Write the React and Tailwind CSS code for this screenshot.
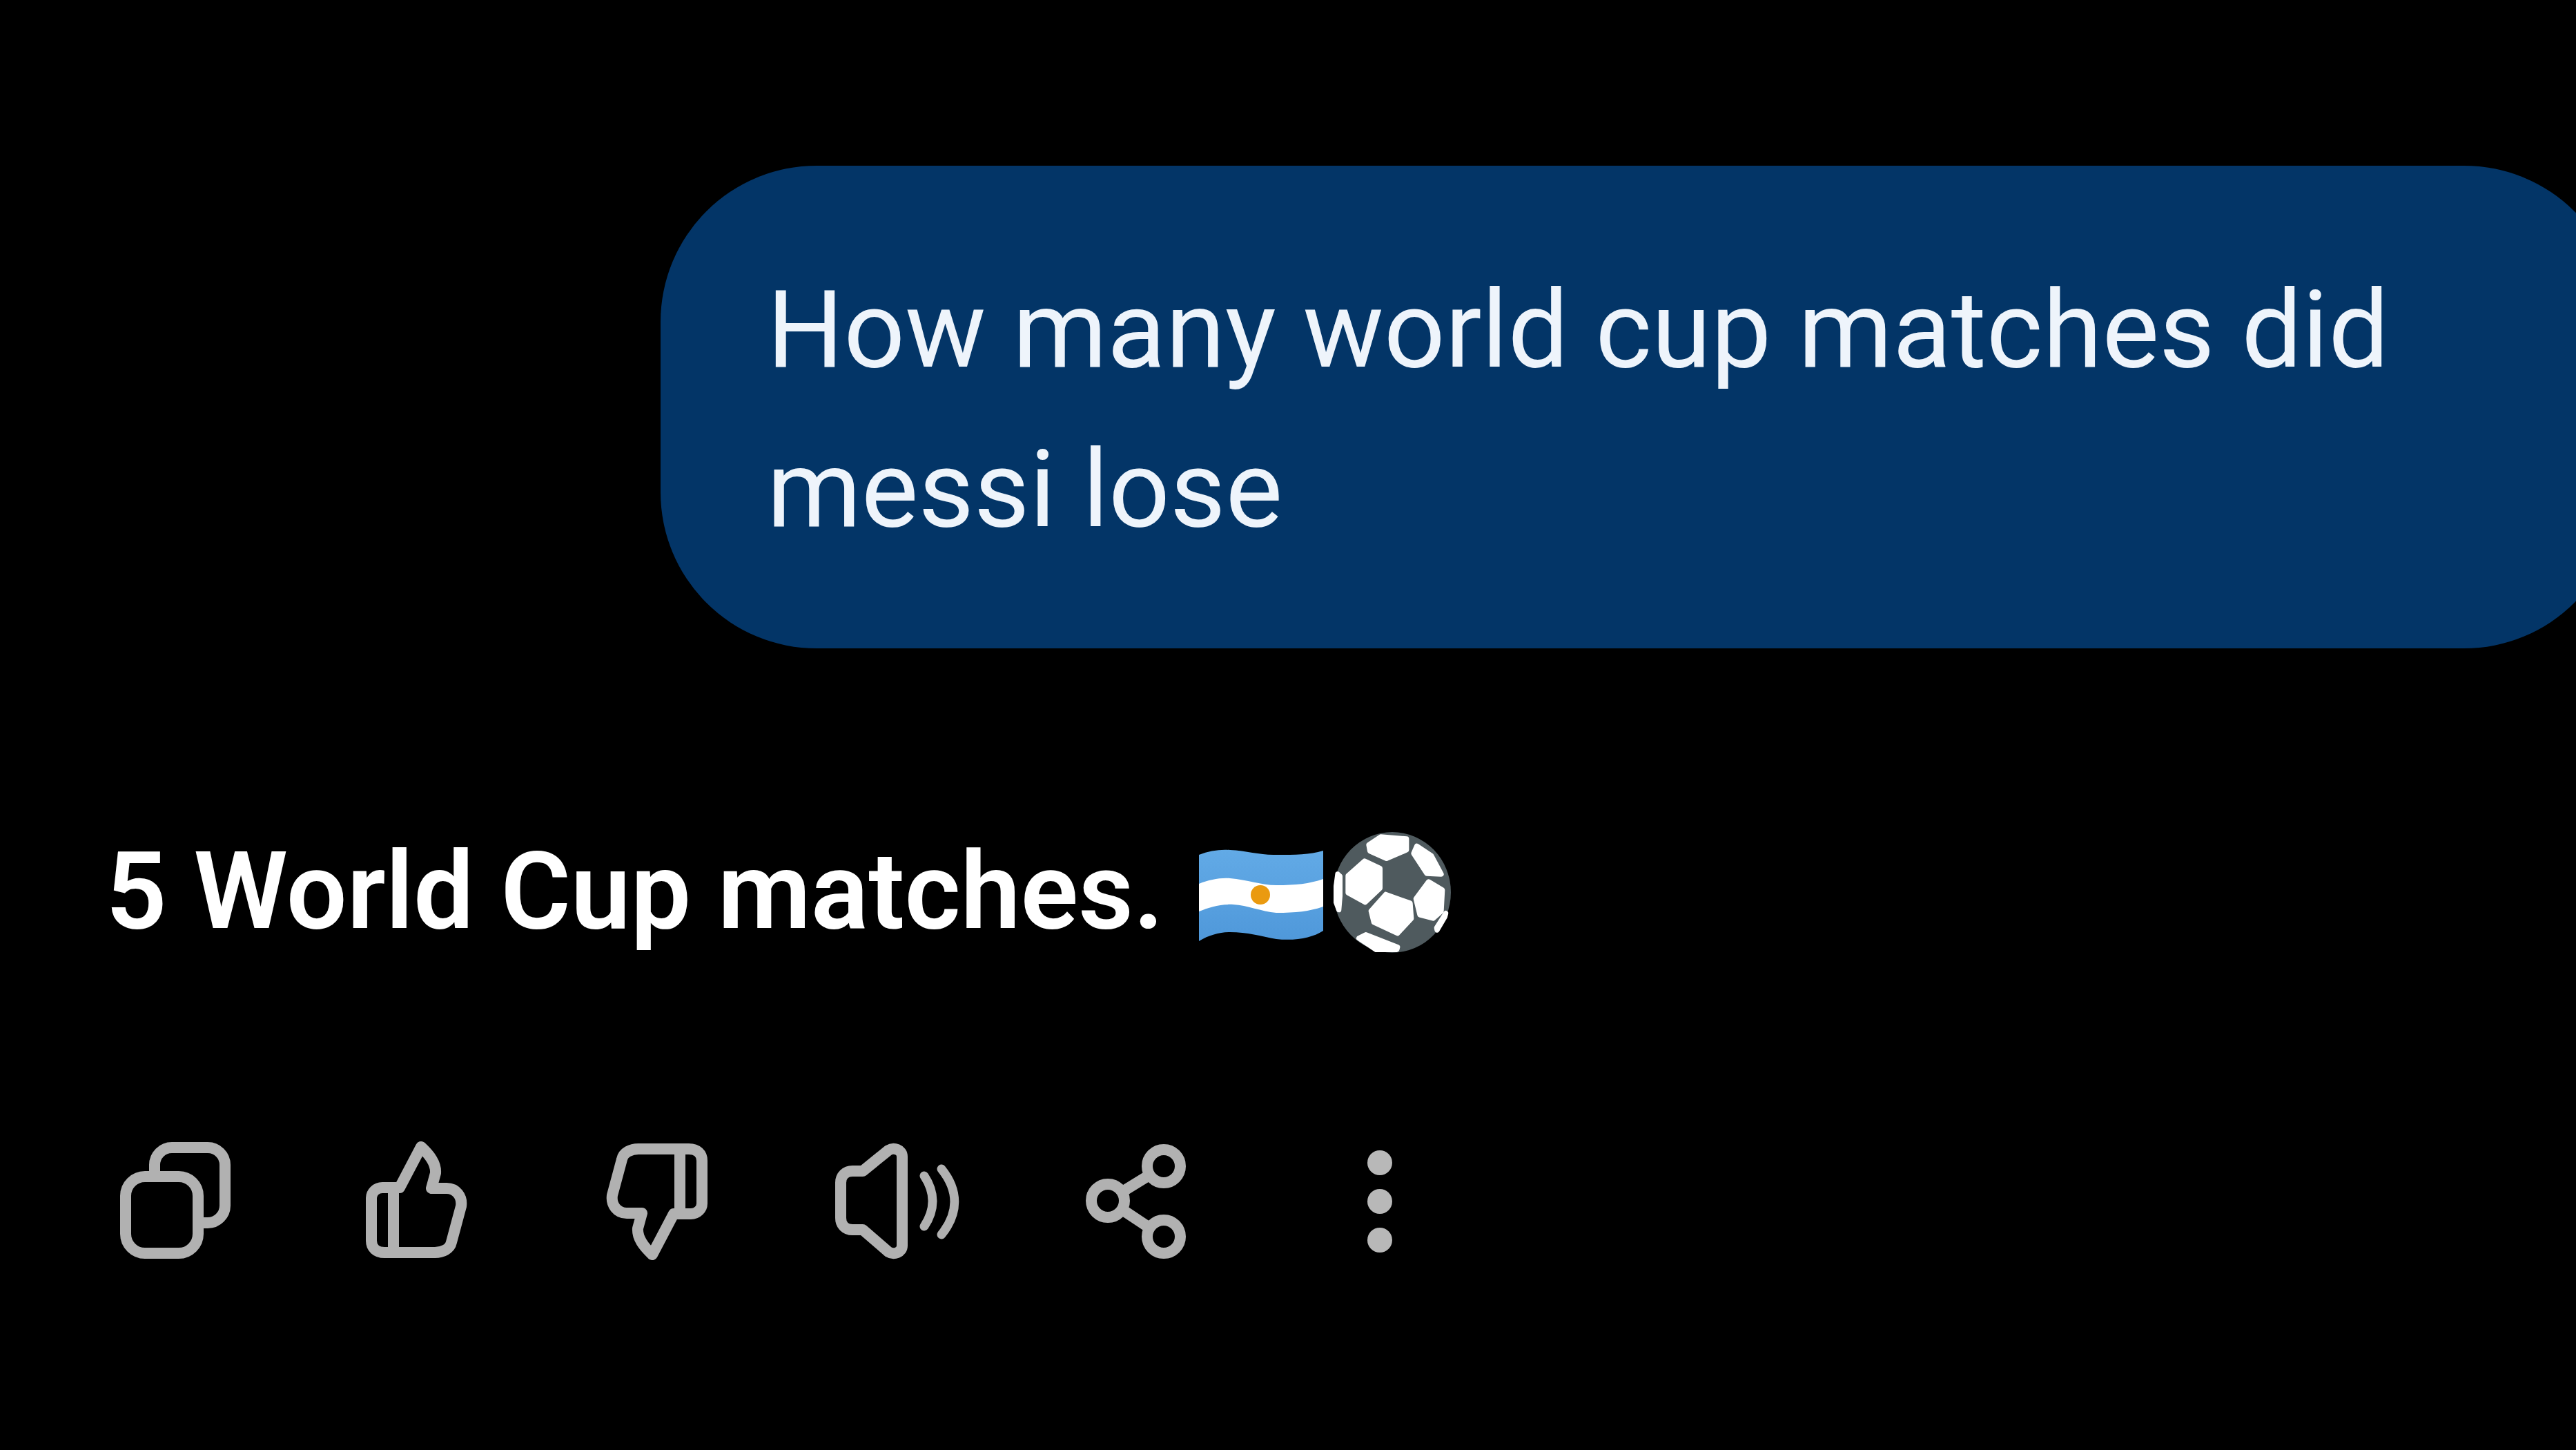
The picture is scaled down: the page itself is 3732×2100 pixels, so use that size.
import React from 'react';

const iconClass = 'w-[180px] h-[180px] overflow-visible fill-none stroke-[#b1b1b1] stroke-[16px]';

const Copy = () => (
  <svg viewBox="0 0 180 180" className={iconClass}>
    <rect x="18" y="55" width="105" height="111" rx="28" />
    <path d="M60 55V38a25 25 0 0 1 25-25h52a25 25 0 0 1 25 25v59a25 25 0 0 1-25 25h-14" />
  </svg>
);

const thumb =
  'M41 71H66L97 12C110 24 119 36 118 50L112 72H134C148 72 157 84 155 98L141 150C139 160 128 165 117 165H44C32 165 25 158 25 148V86C25 78 32 71 41 71ZM57 71V165';

const ThumbUp = () => (
  <svg viewBox="0 0 180 180" className={iconClass} strokeLinejoin="round">
    <path d={thumb} />
  </svg>
);

const ThumbDown = () => (
  <svg viewBox="0 0 180 180" className={iconClass} strokeLinejoin="round">
    <path d={thumb} transform="rotate(180 90 90)" />
  </svg>
);

const Speaker = () => (
  <svg viewBox="0 0 180 180" className={iconClass} strokeLinejoin="round" strokeLinecap="round">
    <path d="M39 47H24C14 47 7 54 7 64V115C7 125 14 132 24 132H39L76 164C84 169 96 165 96 155V26C96 16 84 12 76 17Z" />
    <path d="M128 54C144 78 144 103 128 127" strokeWidth="13" />
    <path d="M153 44C178 75 178 108 153 139" strokeWidth="13" />
  </svg>
);

const Share = () => (
  <svg viewBox="0 0 180 180" className={iconClass}>
    <circle cx="126" cy="40" r="24" />
    <circle cx="45" cy="90" r="24" />
    <circle cx="126" cy="142" r="24" />
    <path d="M66 77L105 53M66 103L105 129" />
  </svg>
);

const More = () => (
  <svg viewBox="0 0 180 180" className="w-[180px] h-[180px] fill-[#b8b8b8]">
    <circle cx="90" cy="35" r="18" />
    <circle cx="90" cy="91" r="18" />
    <circle cx="90" cy="147" r="18" />
  </svg>
);

const Flag = () => (
  <svg viewBox="0 0 180 134" className="w-[180px] h-[134px] shrink-0 mt-[10px]">
    <defs>
      <linearGradient id="flagBlue" x1="0" y1="0" x2="0" y2="1">
        <stop offset="0" stopColor="#62aae6" />
        <stop offset="1" stopColor="#4f98da" />
      </linearGradient>
    </defs>
    <path d="M0 8C15 2 30 0 45 1C70 2 90 9 112 8C140 8 160 8 180 2V118C165 128 140 133 112 130C90 126 70 120 45 120C30 120 15 124 0 133Z" fill="url(#flagBlue)" />
    <path d="M0 50C15 44 30 41 45 42C70 44 90 52 112 52C140 52 160 50 180 43V83C160 90 140 92 112 92C90 90 70 81 50 80C30 79 15 84 0 90Z" fill="#ffffff" />
    <circle cx="89" cy="66" r="14" fill="#ea9a10" />
  </svg>
);

const Ball = () => (
  <svg viewBox="750 72 510 525" className="w-[170px] h-[175px] shrink-0">
    <ellipse cx="1005" cy="334" rx="255" ry="262" fill="#4f5a5e" />
    <g fill="#ffffff" stroke="#ffffff" strokeWidth="22" strokeLinejoin="round">
      <path d="M903 128L955 93L1067 102L1067 150L980 187L908 155Z" />
      <path d="M1098 165L1112 133L1175 175L1218 255L1155 252Z" />
      <path d="M813 262L885 198L952 230L952 316L888 377L813 336Z" />
      <path d="M913 415L977 343L1083 381L1088 448L1028 512L925 464Z" />
      <path d="M1108 362L1163 288L1223 324L1218 416L1183 447L1125 432Z" />
      <path d="M860 533L890 518L1028 572L1025 583L935 583Z" />
      <path d="M758 330L768 255L778 264L778 350L773 410L760 375Z" />
      <path d="M1198 488L1238 425L1234 440L1200 498Z" />
    </g>
  </svg>
);

export default function App() {
  return (
    <div className="w-[3732px] h-[2100px] bg-black overflow-hidden font-['Roboto',sans-serif]">
      <div className="pt-[240px] pl-[957px]">
        <div className="w-[2839px] h-[699px] rounded-[226px] bg-[#033567] pl-[154px] pr-[300px] pt-[122px] text-[#eef4fb] text-[156px] leading-[231px]">
          How many world cup matches did messi lose
        </div>
      </div>

      <div className="flex items-center pl-[153px] mt-[263px] h-[180px] text-white text-[155.5px] font-semibold leading-none">
        <span className="mr-[51px]">5 World Cup matches.</span>
        <Flag />
        <div className="ml-[15px]">
          <Ball />
        </div>
      </div>

      <div className="flex pl-[79px] mt-[267px]">
        {[Copy, ThumbUp, ThumbDown, Speaker, Share, More].map((Icon, i) => (
          <div key={i} className="w-[349px] flex justify-center">
            <Icon />
          </div>
        ))}
      </div>
    </div>
  );
}
